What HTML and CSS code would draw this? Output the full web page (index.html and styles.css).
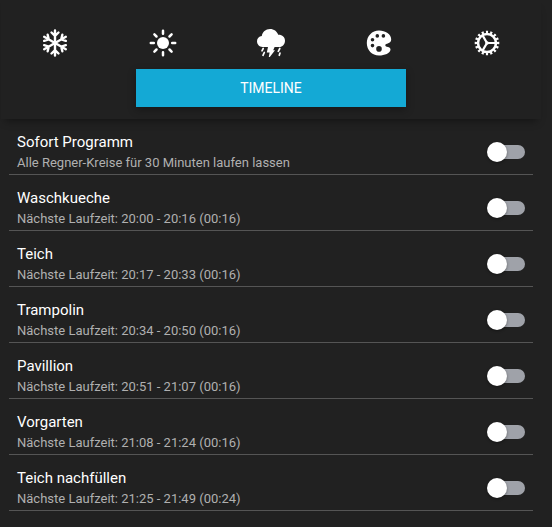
FILE: index.html
```html
<!DOCTYPE html>
<html lang="de">
<head>
<meta charset="utf-8">
<meta name="viewport" content="width=device-width, initial-scale=1">
<title>Timeline</title>
<link rel="stylesheet" href="styles.css">
</head>
<body>
<main class="panel">
  <header class="header">
    <nav class="tabs" aria-label="Bereiche">
      <button class="tab" type="button" aria-label="Winter">
        <svg class="icon" viewBox="0 0 28 28" fill="none" stroke="currentColor" stroke-width="2.4" stroke-linecap="round" stroke-linejoin="round">
          <g id="arm"><path d="M14 14V1.500M10.500 3.500L14 6.800L17.500 3.500"/></g>
          <use href="#arm" transform="rotate(60 14 14)"/>
          <use href="#arm" transform="rotate(120 14 14)"/>
          <use href="#arm" transform="rotate(180 14 14)"/>
          <use href="#arm" transform="rotate(240 14 14)"/>
          <use href="#arm" transform="rotate(300 14 14)"/>
        </svg>
      </button>
      <button class="tab" type="button" aria-label="Sonne">
        <svg class="icon" viewBox="0 0 28 28" fill="currentColor" stroke="currentColor" stroke-width="2.500" stroke-linecap="round">
          <circle cx="14" cy="14" r="6" stroke="none"/>
          <path d="M14 1.800V4.800M14 23.200V26.200M1.800 14H4.800M23.200 14H26.200M5.400 5.400L7.500 7.500M20.500 20.500L22.600 22.600M5.400 22.600L7.500 20.500M20.500 7.500L22.600 5.400"/>
        </svg>
      </button>
      <button class="tab" type="button" aria-label="Gewitter">
        <svg class="icon" viewBox="0 0 28 28" fill="currentColor">
          <path d="M5.500 18C2.300 18 0 15.300 0 12.300C0 9.400 2 7.400 4.800 7C5.400 3 8.700 0 13 0C17 0 20 2.300 21.200 5.800C25.200 5.600 28 8.300 28 11.700C28 15 25.400 18 22.300 18Z"/>
          <path d="M11 18H17.600L16.200 21.300H18L12.800 28H11.800L12.600 23.500H9.800Z"/>
          <path d="M6.200 19.500L5 21.800M7.300 23.500L6 26.300M22.800 19.500L21.300 22.300M23 24L22.300 26.300" fill="none" stroke="currentColor" stroke-width="1.700" stroke-linecap="round"/>
        </svg>
      </button>
      <button class="tab" type="button" aria-label="Farben">
        <svg class="icon" viewBox="0 0 28 28" fill="currentColor">
          <path fill-rule="evenodd" d="M14 1.500C7 1.500 1.800 7 1.800 14C1.800 21 7 26.500 14 26.500C19.500 26.500 25.500 24.300 25.500 20.500C25.500 17.300 20.300 18.700 20.300 16.300C20.300 13.900 26.200 15.500 26.200 10.300C26.200 5 20.500 1.500 14 1.500ZM12.300 5.100a1.800 1.800 0 1 1 0 3.600a1.800 1.800 0 1 1 0-3.600ZM18.400 5.100a1.800 1.800 0 1 1 0 3.600a1.800 1.800 0 1 1 0-3.600ZM7.500 9a1.800 1.800 0 1 1 0 3.600a1.800 1.800 0 1 1 0-3.600ZM7.500 14.800a1.800 1.800 0 1 1 0 3.600a1.800 1.800 0 1 1 0-3.600ZM14 17.100a2.800 2.800 0 1 1 0 5.600a2.800 2.800 0 1 1 0-5.600Z"/>
        </svg>
      </button>
      <button class="tab" type="button" aria-label="Einstellungen">
        <svg class="icon" viewBox="0 0 28 28" fill="none" stroke="currentColor">
          <circle cx="14" cy="14" r="9" stroke-width="2.600"/>
          <circle cx="14" cy="14" r="11" stroke-width="2.600" pathLength="64" stroke-dasharray="2 2" stroke-dashoffset="1"/>
          <path d="M14 14H22.500M14 14L9.700 6.600M14 14L9.700 21.400" stroke-width="2.200"/>
          <circle cx="14" cy="14" r="1.800" fill="currentColor" stroke="none"/>
        </svg>
      </button>
    </nav>
    <button class="timeline" type="button">TIMELINE</button>
  </header>
  <ul class="list">
    <li><label class="row"><span class="text"><span class="title">Sofort Programm</span><span class="detail">Alle Regner-Kreise für 30 Minuten laufen lassen</span></span><input class="switch" type="checkbox" role="switch"></label></li>
    <li><label class="row"><span class="text"><span class="title">Waschkueche</span><span class="detail">Nächste Laufzeit: 20:00 - 20:16 (00:16)</span></span><input class="switch" type="checkbox" role="switch"></label></li>
    <li><label class="row"><span class="text"><span class="title">Teich</span><span class="detail">Nächste Laufzeit: 20:17 - 20:33 (00:16)</span></span><input class="switch" type="checkbox" role="switch"></label></li>
    <li><label class="row"><span class="text"><span class="title">Trampolin</span><span class="detail">Nächste Laufzeit: 20:34 - 20:50 (00:16)</span></span><input class="switch" type="checkbox" role="switch"></label></li>
    <li><label class="row"><span class="text"><span class="title">Pavillion</span><span class="detail">Nächste Laufzeit: 20:51 - 21:07 (00:16)</span></span><input class="switch" type="checkbox" role="switch"></label></li>
    <li><label class="row"><span class="text"><span class="title">Vorgarten</span><span class="detail">Nächste Laufzeit: 21:08 - 21:24 (00:16)</span></span><input class="switch" type="checkbox" role="switch"></label></li>
    <li><label class="row"><span class="text"><span class="title">Teich nachfüllen</span><span class="detail">Nächste Laufzeit: 21:25 - 21:49 (00:24)</span></span><input class="switch" type="checkbox" role="switch"></label></li>
  </ul>
</main>
</body>
</html>
```
FILE: styles.css
```css
* {
  box-sizing: border-box;
}

body {
  margin: 0;
  background: #212121;
  color: #fff;
  font-family: Roboto, sans-serif;
}

.panel {
  margin: 0 11px 0 1px;
}

.header {
  padding: 17px 0 12px;
  box-shadow: 0 6px 8px -4px rgba(0, 0, 0, 0.4);
}

.tabs {
  display: grid;
  grid-template-columns: repeat(5, 1fr);
}

.tab {
  display: flex;
  align-items: center;
  justify-content: center;
  height: 52px;
  padding: 0;
  border: 0;
  background: none;
  color: #fff;
}

.icon {
  width: 28px;
  height: 28px;
}

.timeline {
  display: block;
  width: 50%;
  height: 38px;
  margin: 0 auto;
  border: 0;
  background: #14a9d5;
  box-shadow: 0 3px 8px rgba(0, 0, 0, 0.3);
  color: #fff;
  font: 14px Roboto, sans-serif;
}

.list {
  margin: 0;
  padding: 0 8px;
  list-style: none;
}

.row {
  display: flex;
  align-items: center;
  justify-content: space-between;
  height: 56px;
  padding: 10px 8px 0;
  border-bottom: 1px solid #555;
}

.text {
  display: flex;
  flex-direction: column;
}

.title {
  font-size: 15px;
  line-height: 22px;
}

.detail {
  color: #b0b0b0;
  font-size: 13px;
  line-height: 20px;
}

.switch {
  appearance: none;
  display: flex;
  align-items: center;
  flex: none;
  width: 36px;
  height: 14px;
  margin: 0 0 0 16px;
  border-radius: 7px;
  background: #9fa2a9;
}

.switch::before {
  content: "";
  width: 20px;
  height: 20px;
  margin-left: -2px;
  border-radius: 50%;
  background: #fff;
  box-shadow: 0 1px 3px rgba(0, 0, 0, 0.4);
}

.switch:checked {
  justify-content: flex-end;
  background: #14a9d5;
}
```
